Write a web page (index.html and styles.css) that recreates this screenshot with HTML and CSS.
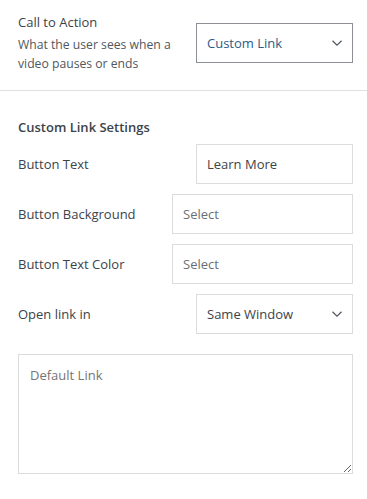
FILE: index.html
```html
<!DOCTYPE html>
<html lang="en">
<head>
    <meta charset="UTF-8">
    <meta name="viewport" content="width=device-width, initial-scale=1.0">
    <title>Call to Action</title>
    <link rel="stylesheet" href="styles.css">
</head>
<body>

<div class="panel">
    <!-- Call to action -->
    <div class="cta-row">
        <div class="cta-label">
            <h3>Call to Action</h3>
            <p>What the user sees when a video pauses or ends</p>
        </div>
        <div class="select-box cta-select">
            <span>Custom Link</span>
            <svg class="chevron" width="12" height="8" viewBox="0 0 12 8"><path d="M1.5 1.8 6 6.2 10.5 1.8" fill="none" stroke="#50575e" stroke-width="1.2"/></svg>
        </div>
    </div>
</div>

<hr class="divider">

<div class="panel settings">
    <h4>Custom Link Settings</h4>

    <div class="field-row">
        <label>Button Text</label>
        <div class="input-box short">Learn More</div>
    </div>

    <div class="field-row">
        <label>Button Background</label>
        <div class="input-box wide placeholder">Select</div>
    </div>

    <div class="field-row">
        <label>Button Text Color</label>
        <div class="input-box wide placeholder">Select</div>
    </div>

    <div class="field-row">
        <label>Open link in</label>
        <div class="select-box short">
            <span>Same Window</span>
            <svg class="chevron" width="12" height="8" viewBox="0 0 12 8"><path d="M1.5 1.8 6 6.2 10.5 1.8" fill="none" stroke="#50575e" stroke-width="1.2"/></svg>
        </div>
    </div>

    <textarea class="link-area" placeholder="Default Link"></textarea>
</div>

</body>
</html>
```

FILE: styles.css
```css
* {
    margin: 0;
    padding: 0;
    box-sizing: border-box;
    font-family: 'Open Sans', sans-serif;
}
body {
    background: #fff;
    color: #3c434a;
    font-size: 13px;
    width: 367px;
}
.panel {
    padding: 0 14px 0 18px;
}
.cta-row {
    display: flex;
    justify-content: space-between;
    align-items: flex-start;
    padding-top: 13px;
    height: 90px;
}
.cta-label h3 {
    font-size: 13px;
    font-weight: 400;
    color: #3c434a;
    line-height: 18px;
}
.cta-label p {
    margin-top: 4px;
    width: 172px;
    font-size: 12.2px;
    line-height: 19px;
    color: #50575e;
}
.select-box {
    display: flex;
    align-items: center;
    justify-content: space-between;
    height: 40px;
    padding: 0 9px 0 10px;
    border: 1px solid #dcdcde;
    color: #3c434a;
}
.cta-select {
    width: 157px;
    margin-top: 10px;
    border-color: #8c8f94;
    color: #2c5c88;
}
.divider {
    border: none;
    border-top: 1px solid #e0e0e0;
}
.settings {
    padding-top: 27px;
}
.settings h4 {
    font-size: 13px;
    font-weight: 600;
    color: #3c434a;
    line-height: 18px;
    margin-bottom: 8px;
}
.field-row {
    display: flex;
    justify-content: space-between;
    align-items: center;
    height: 40px;
    margin-bottom: 10px;
}
.field-row label {
    color: #3c434a;
}
.input-box {
    display: flex;
    align-items: center;
    height: 40px;
    padding: 0 10px;
    border: 1px solid #dcdcde;
    color: #3c434a;
}
.input-box.placeholder {
    color: #6b6f75;
}
.short {
    width: 157px;
}
.wide {
    width: 181px;
}
.link-area {
    display: block;
    margin-top: 20px;
    width: 335px;
    height: 120px;
    padding: 11px 11px;
    border: 1px solid #dcdcde;
    font-size: 13px;
    line-height: 19px;
    color: #3c434a;
    resize: vertical;
    outline: none;
}
.link-area::placeholder {
    color: #757575;
}
```
